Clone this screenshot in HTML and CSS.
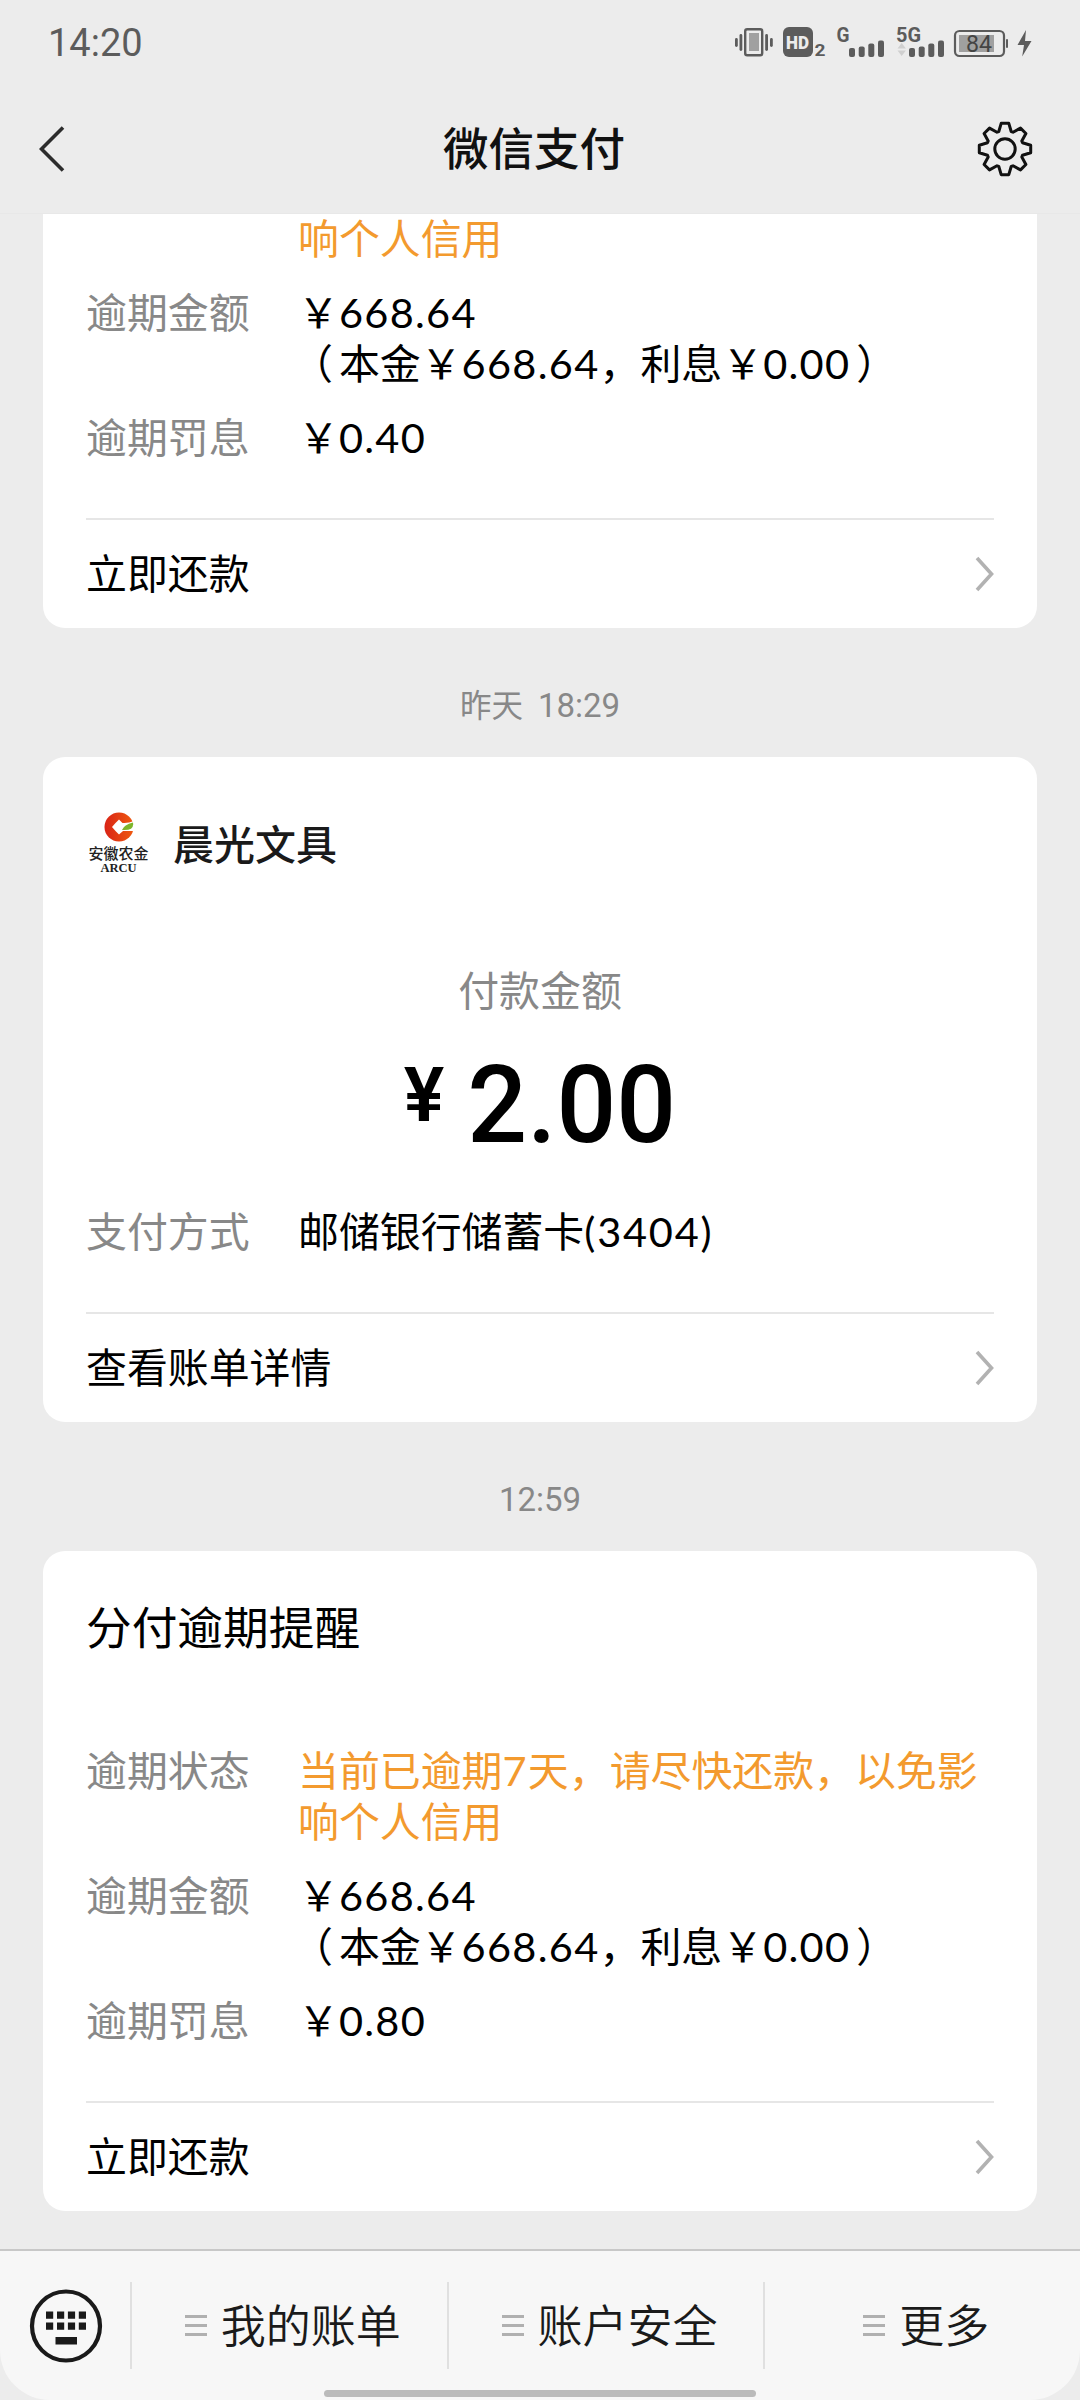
FILE: index.html
```html
<!DOCTYPE html>
<html lang="zh-CN">
<head>
<meta charset="utf-8">
<title>微信支付</title>
<link rel="stylesheet" href="styles.css">
</head>
<body>
<div class="screen">
  <header class="top">
    <div class="status">
      <span class="clock">14:20</span>
      <svg class="status-icons" width="300" height="40" viewBox="734 22 300 40">
        <g fill="#5c5c5c">
          <rect x="745.2" y="29.2" width="17" height="26" rx="2" fill="none" stroke="#5c5c5c" stroke-width="2.4"/>
          <rect x="749" y="33" width="10" height="18" fill="#a0a0a0"/>
          <rect x="739.5" y="34" width="2.8" height="17" rx="1.4"/>
          <rect x="735" y="38" width="2.8" height="9" rx="1.4"/>
          <rect x="765.2" y="34" width="2.8" height="17" rx="1.4"/>
          <rect x="770" y="38" width="2.8" height="9" rx="1.4"/>
          <rect x="783" y="27" width="30" height="30" rx="6"/>
          <text class="hd" x="786" y="49" textLength="23" lengthAdjust="spacingAndGlyphs">HD</text>
          <text class="sim" x="814.5" y="56" textLength="11" lengthAdjust="spacingAndGlyphs">2</text>
          <text class="net" x="836.5" y="41.5" textLength="13" lengthAdjust="spacingAndGlyphs">G</text>
          <rect x="849" y="48" width="6" height="9" rx="2"/>
          <rect x="858.7" y="46.5" width="6" height="10.5" rx="2"/>
          <rect x="868.3" y="43.5" width="6" height="13.5" rx="2"/>
          <rect x="878" y="40.5" width="6" height="16.5" rx="2"/>
          <text class="net" x="896" y="41.5" textLength="25" lengthAdjust="spacingAndGlyphs">5G</text>
          <path d="M897.5 48.5l4.2-5.5 4.2 5.5zM897.5 50.5l4.2 5.5 4.2-5.5z" fill="#d0d0d0"/>
          <rect x="909" y="48" width="6" height="9" rx="2"/>
          <rect x="918.7" y="46.5" width="6" height="10.5" rx="2"/>
          <rect x="928.3" y="43.5" width="6" height="13.5" rx="2"/>
          <rect x="938" y="40.5" width="6" height="16.5" rx="2"/>
          <rect x="955" y="31" width="49" height="25" rx="4.5" fill="none" stroke="#5c5c5c" stroke-width="2.2"/>
          <rect x="959" y="35" width="35" height="17" fill="#a0a0a0"/>
          <rect x="1006" y="39" width="2" height="9" rx="1"/>
          <text class="level" x="966" y="52" textLength="26" lengthAdjust="spacingAndGlyphs">84</text>
          <path d="M1026 30l-8.500 15h6.500l-1.800 11.500 9.300-15.500h-6.500z"/>
        </g>
      </svg>
    </div>
    <div class="nav">
      <svg width="26" height="48" viewBox="0 0 26 48" fill="none" stroke="#2c2c2c" stroke-width="3.600"><path d="M24 2.500L2.500 24 24 45.500"/></svg>
      <h1 class="nav-title">微信支付</h1>
      <svg width="56" height="56" viewBox="-28 -28 56 56" fill="none" stroke="#111" stroke-width="3" stroke-linejoin="round">
        <circle r="10.200"/>
        <path d="M-6.200-17.500L-3.800-25.700H3.800L6.200-17.500 8-16.800 15.500-20.900 20.900-15.500 16.800-8 17.500-6.200 25.700-3.800V3.800L17.500 6.200 16.800 8 20.900 15.500 15.500 20.900 8 16.800 6.200 17.500 3.800 25.700H-3.800L-6.200 17.500-8 16.800-15.500 20.900-20.900 15.500-16.800 8-17.500 6.200-25.700 3.800V-3.800L-17.500-6.200-16.800-8-20.900-15.500-15.500-20.900-8-16.800z"/>
      </svg>
    </div>
  </header>

  <main class="feed">
    <section class="card card-cut">
      <dl class="rows">
        <dt></dt><dd class="warn">响个人信用</dd>
        <dt>逾期金额</dt><dd>￥<span class="num">668.64</span><br><span class="open">（</span>本金￥<span class="num">668.64</span>，利息￥<span class="num">0.00</span><span class="close">）</span></dd>
        <dt>逾期罚息</dt><dd>￥<span class="num">0.40</span></dd>
      </dl>
      <div class="action"><span>立即还款</span><svg class="chev" width="19" height="36" viewBox="0 0 19 36"><path d="M2 2L16.500 18 2 34"/></svg></div>
    </section>

    <div class="time">昨天 <span class="time-num">18:29</span></div>

    <section class="card">
      <div class="merchant">
        <div class="logo">
          <svg width="30" height="30" viewBox="-15 -15 30 30">
            <defs><linearGradient id="coin" x1="0" x2="1"><stop offset="0" stop-color="#d92316"/><stop offset="1" stop-color="#ef5a10"/></linearGradient></defs>
            <circle r="14.500" fill="url(#coin)"/>
            <path d="M0-7.500L3.500-4Q9-3.500 15-6V4H4L0 7.500-3.500 4-7 0-3.500-4z" fill="#fff"/>
            <path d="M3 3Q5-2.500 14-4.500 15.500 4 3 3z" fill="#7db52b"/>
          </svg>
          <span class="logo-cn">安徽农金</span>
          <span class="logo-en">ARCU</span>
        </div>
        <h2 class="merchant-name">晨光文具</h2>
      </div>
      <div class="pay-label">付款金额</div>
      <div class="pay-amount"><span class="yen">¥</span><span class="sum">2.00</span></div>
      <dl class="rows">
        <dt>支付方式</dt><dd>邮储银行储蓄卡<span class="num card-no">(3404)</span></dd>
      </dl>
      <div class="action"><span>查看账单详情</span><svg class="chev" width="19" height="36" viewBox="0 0 19 36"><path d="M2 2L16.500 18 2 34"/></svg></div>
    </section>

    <div class="time"><span class="time-num">12:59</span></div>

    <section class="card">
      <h2 class="notice-title">分付逾期提醒</h2>
      <dl class="rows">
        <dt>逾期状态</dt><dd class="warn">当前已逾期<span class="num">7</span>天，请尽快还款，以免影响个人信用</dd>
        <dt>逾期金额</dt><dd>￥<span class="num">668.64</span><br><span class="open">（</span>本金￥<span class="num">668.64</span>，利息￥<span class="num">0.00</span><span class="close">）</span></dd>
        <dt>逾期罚息</dt><dd>￥<span class="num">0.80</span></dd>
      </dl>
      <div class="action"><span>立即还款</span><svg class="chev" width="19" height="36" viewBox="0 0 19 36"><path d="M2 2L16.500 18 2 34"/></svg></div>
    </section>
  </main>

  <footer class="menu">
    <div class="keyboard">
      <svg width="74" height="76" viewBox="-37 -38 74 76" fill="#1a1a1a">
        <ellipse rx="34" ry="34.500" fill="none" stroke="#1a1a1a" stroke-width="4.200"/>
        <path d="M-20-14.500h7.200v7.200h-7.200zM-9-14.500h7.200v7.200H-9zM1.900-14.500h7.200v7.200H1.900zM12.800-14.500H20v7.200h-7.200zM-20-3.500h7.200v7.200h-7.200zM-9-3.500h7.200v7.200H-9zM1.900-3.500h7.200v7.200H1.900zM12.800-3.500H20v7.200h-7.200zM-10.500 11h21.500v7.500h-21.500z"/>
      </svg>
    </div>
    <div class="tab"><i class="lines"></i><span>我的账单</span></div>
    <div class="tab"><i class="lines"></i><span>账户安全</span></div>
    <div class="tab"><i class="lines"></i><span>更多</span></div>
    <div class="home-bar"></div>
  </footer>
</div>
</body>
</html>
```
FILE: styles.css
```css
* { box-sizing: border-box; margin: 0; padding: 0; }
body {
  background: #ececec;
  font-family: "Noto Sans CJK SC", sans-serif;
  font-size: 40.9px;
  color: #000;
}
.screen { width: 1080px; height: 2400px; display: flex; flex-direction: column; overflow: hidden; }

.top { height: 214px; flex: none; border-bottom: 1px solid #e8e8e8; }
.status { height: 84px; display: flex; justify-content: space-between; align-items: center; padding: 0 46px 0 48px; }
.clock { font: 38px/84px Roboto, sans-serif; color: #5c5c5c; padding-top: 2px; }
.hd { font: 900 19px Roboto, sans-serif; fill: #ececec; }
.sim { font: 700 17px Roboto, sans-serif; }
.net { font: 700 20px Roboto, sans-serif; }
.level { font: 24px Roboto, sans-serif; fill: #444; }
.nav { height: 129px; display: flex; justify-content: space-between; align-items: center; padding: 0 47px 0 39px; }
.nav-title { font-size: 45.5px; line-height: 60px; font-weight: 500; color: #111; padding: 0 0 6px 26px; }

.feed { flex: 1; padding: 0 43px; display: flex; flex-direction: column; }
.card { flex: none; background: #fff; border-radius: 22px; padding: 0 43px; }
.card-cut { border-radius: 0 0 22px 22px; }
.rows { display: grid; grid-template-columns: 212px 1fr; row-gap: 23px; line-height: 51px; margin-top: -3px; padding-bottom: 57px; }
.rows dt { color: #888; }
.rows .warn { color: #f39a2e; }
.num { font-family: Lato, sans-serif; font-size: 41.5px; line-height: 0; letter-spacing: 1.3px; }
.card-no { letter-spacing: 1.8px; }
.open { margin: 0 6px 0 -6px; }
.close { margin: 0 -6px 0 6px; }
.action { height: 110px; border-top: 2px solid #e6e6e6; display: flex; justify-content: space-between; align-items: center; line-height: 60px; }
.action span { padding-bottom: 4px; }
.chev { fill: none; stroke: #b2b2b2; stroke-width: 3.600; }

.time { height: 129px; flex: none; padding-top: 51px; text-align: center; line-height: 48px; font-size: 31.5px; color: #888; word-spacing: 8px; }
.time-num { font-family: Roboto, sans-serif; font-size: 33px; line-height: 0; }

.merchant { display: flex; padding-top: 54px; gap: 23px; height: 204px; }
.logo { width: 64px; display: flex; flex-direction: column; align-items: center; padding: 1px 0 0 1px; }
.logo-cn { font-size: 15px; line-height: 18px; font-weight: 500; color: #222; margin-top: 2px; white-space: nowrap; }
.logo-en { font: 12.5px/13px "Liberation Serif", serif; font-weight: bold; color: #222; }
.merchant-name { font-size: 41px; line-height: 62px; font-weight: 500; color: #1a1a1a; }
.pay-label { text-align: center; color: #888; line-height: 56px; }
.pay-amount { display: flex; justify-content: center; gap: 18px; font: 500 108px/128px Roboto, sans-serif; height: 190px; padding-top: 24px; }
.yen { font-size: 76px; line-height: 108px; font-weight: 600; }
.sum { font-weight: 500; transform: scaleX(.975); transform-origin: 100% 50%; }
.notice-title { font-size: 45.7px; line-height: 66px; font-weight: 400; height: 195px; padding-top: 41px; }

.menu { position: relative; height: 151px; flex: none; display: flex; border-top: 2px solid #c8c8c8; background: #f7f7f7; border-radius: 0 0 50px 50px; padding-top: 31px; }
.keyboard { width: 130px; height: 87px; padding-left: 1px; display: flex; justify-content: center; align-items: center; }
.tab { flex: 1; height: 87px; border-left: 2px solid #e0e0e0; display: flex; justify-content: center; align-items: center; gap: 14px; padding-left: 7px; font-size: 45px; font-weight: 350; line-height: 66px; color: #1a1a1a; }
.tab span { padding-bottom: 3px; }
.lines { width: 22px; height: 21px; border-top: 3px solid #b0b0b0; border-bottom: 3px solid #b0b0b0; display: flex; align-items: center; }
.lines::before { content: ""; flex: 1; height: 3px; background: #b0b0b0; }
.home-bar { position: absolute; left: 324px; bottom: 3px; width: 432px; height: 7px; border-radius: 4px; background: #bbb; }
```
